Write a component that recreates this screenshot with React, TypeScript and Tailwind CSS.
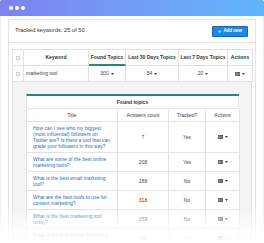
import React from 'react';

const topics = [
  { lines: ['How can I see who my biggest', '(most influential) followers on', 'Twitter are? Is there a tool that can', 'grade your followers in this way?'], count: '7', tracked: 'Yes' },
  { lines: ['What are some of the best online', 'marketing tools?'], count: '208', tracked: 'Yes' },
  { lines: ['What is the best email marketing', 'tool?'], count: '188', tracked: 'No' },
  { lines: ['What are the best tools to use for', 'content marketing?'], count: '318', tracked: 'No' },
  { lines: ['What is the best marketing tool', 'today?'], count: '159', tracked: 'No' },
  { lines: ['What is the best Twitter Marketing', 'Tool?'], count: '66', tracked: 'Yes' },
];

function Caret() {
  return (
    <svg width="3" height="2" viewBox="0 0 3 2" className="ml-[2px]">
      <path d="M0 0h3L1.5 2z" fill="#444" />
    </svg>
  );
}

function ActionsIcon() {
  return (
    <div className="flex items-center">
      <svg width="5" height="4" viewBox="0 0 5 4">
        <rect width="5" height="4" fill="#555" />
        <path d="M0 1.35h5M0 2.65h5M1.7 0v4" stroke="#bbb" strokeWidth="0.4" />
      </svg>
      <Caret />
    </div>
  );
}

function Checkbox() {
  return <div className="w-[4px] h-[4px] rounded-[1px] border border-[#c8c8c8] bg-[#f3f3f3]" />;
}

export default function App() {
  return (
    <div className="w-[264px] h-[243px] bg-white relative overflow-hidden font-['Liberation_Sans',Arial,sans-serif] text-[#333]">
      {/* Window bar */}
      <div className="h-[16px] bg-linear-to-r from-[#7d83f1] to-[#5db6fc] flex items-center gap-[2px] pl-[9px] rounded-t-[2px]">
        <div className="w-[4px] h-[4px] rounded-full bg-white" />
        <div className="w-[4px] h-[4px] rounded-full bg-white" />
        <div className="w-[4px] h-[4px] rounded-full bg-white" />
      </div>

      <div className="border-x border-[#efefef] px-[7px] pt-[3px]">
        <div className="border border-[#e3e3e3] bg-white">
          {/* Card header */}
          <div className="h-[23px] flex items-center justify-between pl-[6px] pr-[7px] border-b border-[#e6e6e6]">
            <span className="text-[5.7px] leading-none text-[#333]">Tracked keywords: 25 of 50</span>
            <button className="w-[36px] h-[11px] rounded-[1px] bg-[#1e88e5] border border-[#1466c0] flex items-center justify-center gap-[2px] text-white text-[4.5px] font-bold leading-none">
              <span className="text-[6px] leading-none">+</span>
              <span>Add new</span>
            </button>
          </div>

          {/* Keywords table */}
          <div className="px-[3px] pt-[6px]">
            <div className="border-l border-t border-[#e0e0e0] text-[5px] leading-none">
              <div className="grid grid-cols-[11px_65px_37px_53px_49px_25px] h-[16px] font-semibold text-[#333]">
                <div className="border-r border-b border-[#e0e0e0] flex items-center justify-center"><Checkbox /></div>
                <div className="border-r border-b border-[#e0e0e0] flex items-center justify-center">Keyword</div>
                <div className="border-r border-b-2 border-r-[#e0e0e0] border-b-[#23897b] flex items-center justify-center">Found Topics</div>
                <div className="border-r border-b border-[#e0e0e0] flex items-center justify-center">Last 30 Days Topics</div>
                <div className="border-r border-b border-[#e0e0e0] flex items-center justify-center">Last 7 Days Topics</div>
                <div className="border-r border-b border-[#e0e0e0] flex items-center justify-center">Actions</div>
              </div>
              <div className="grid grid-cols-[11px_65px_37px_53px_49px_25px] h-[16px] text-[#444]">
                <div className="border-r border-b border-[#e0e0e0] flex items-center justify-center"><Checkbox /></div>
                <div className="border-r border-b border-[#e0e0e0] flex items-center pl-[2px]">marketing tool</div>
                <div className="border-r border-b border-[#e0e0e0] flex items-center justify-center">300<Caret /></div>
                <div className="border-r border-b border-[#e0e0e0] flex items-center justify-center">54<Caret /></div>
                <div className="border-r border-b border-[#e0e0e0] flex items-center justify-center">20<Caret /></div>
                <div className="border-r border-b border-[#e0e0e0] flex items-center justify-center"><ActionsIcon /></div>
              </div>

              {/* Nested found topics */}
              <div className="border-r border-[#e0e0e0] bg-[#f4f4f4] pl-[13px] pr-[12px] pt-[12px] pb-[10px]">
                <div className="bg-white border-t-2 border-t-[#23897b] border-l border-l-[#e3e3e3]">
                  <div className="h-[13px] border-r border-b border-[#e3e3e3] flex items-center justify-center font-semibold text-[#333]">
                    Found topics
                  </div>
                  <div className="grid grid-cols-[91px_51px_37px_34px] h-[13px] text-[#444] font-medium">
                    <div className="border-r border-b border-[#e3e3e3] flex items-center justify-center">Title</div>
                    <div className="border-r border-b border-[#e3e3e3] flex items-center justify-center">Answers count</div>
                    <div className="border-r border-b border-[#e3e3e3] flex items-center justify-center">Tracked?</div>
                    <div className="border-r border-b border-[#e3e3e3] flex items-center justify-center">Actions</div>
                  </div>
                  {topics.map((t) => (
                    <div key={t.count} className="grid grid-cols-[91px_51px_37px_34px] text-[#444]">
                      <div className="border-r border-b border-[#e3e3e3] pl-[6px] pr-[2px] py-[3px] leading-[6px] text-[#2d6fba] whitespace-nowrap">
                        {t.lines.map((l) => (
                          <div key={l}>{l}</div>
                        ))}
                      </div>
                      <div className="border-r border-b border-[#e3e3e3] flex items-center justify-center">{t.count}</div>
                      <div className="border-r border-b border-[#e3e3e3] flex items-center justify-center">{t.tracked}</div>
                      <div className="border-r border-b border-[#e3e3e3] flex items-center justify-center"><ActionsIcon /></div>
                    </div>
                  ))}
                </div>
              </div>
            </div>
          </div>
        </div>
      </div>

      {/* Bottom fade */}
      <div className="absolute inset-x-0 bottom-0 h-[34px] bg-linear-to-b from-white/0 via-white/70 to-white" />
    </div>
  );
}
